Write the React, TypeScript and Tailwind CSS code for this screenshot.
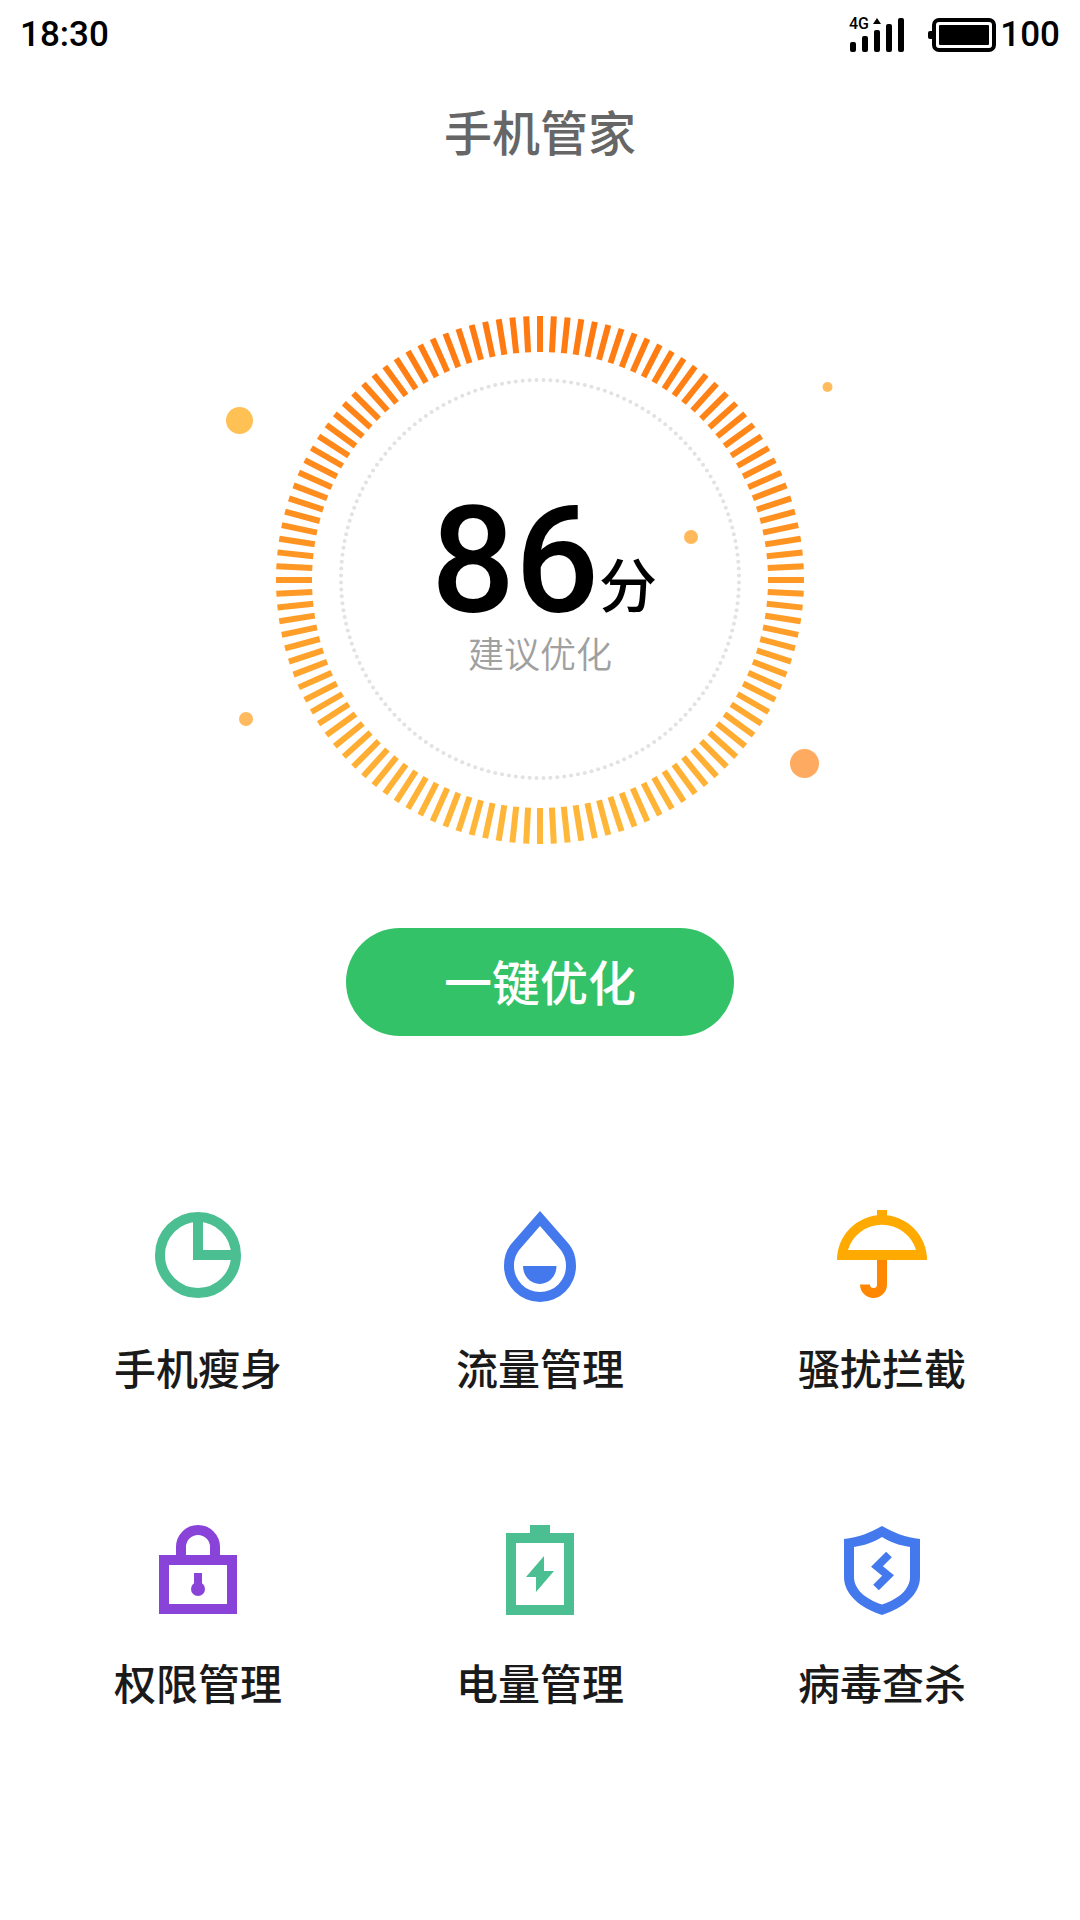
import React from 'react'

interface Orb {
  cx: number
  cy: number
  r: number
  color: string
}

interface ToolItem {
  name: string
  icon: React.ComponentType
}

const SignalIcon: React.FC = () => (
  <svg className="w-[56px] h-[36px] overflow-visible" viewBox="0 0 56 36" aria-hidden="true">
    <text x="1" y="12" fontSize="16" fontWeight="500" fontFamily="Roboto, sans-serif">4G</text>
    <path d="M29 1l4 6h-8z" />
    <rect x="2" y="25" width="6" height="10" rx="2" />
    <rect x="14" y="19" width="6" height="16" rx="2" />
    <rect x="26" y="13" width="6" height="22" rx="2" />
    <rect x="38" y="7" width="6" height="28" rx="2" />
    <rect x="50" y="1" width="6" height="34" rx="2" />
  </svg>
)

const BatteryIcon: React.FC = () => (
  <svg className="w-[68px] h-[36px]" viewBox="0 0 68 36" aria-hidden="true">
    <rect x="0" y="14" width="6" height="8" rx="2" />
    <rect x="6" y="3" width="60" height="30" rx="5" fill="none" stroke="black" strokeWidth="4" />
    <rect x="11" y="8" width="50" height="20" rx="1" />
  </svg>
)

const StatusBar: React.FC = () => (
  <header className="flex h-[70px] items-center justify-between px-5 font-[Roboto,sans-serif] text-[35px] font-medium text-black">
    <span>18:30</span>
    <div className="flex items-center">
      <SignalIcon />
      <span className="ml-6">
        <BatteryIcon />
      </span>
      <span className="ml-1">100</span>
    </div>
  </header>
)

const orbs: Orb[] = [
  { cx: 19.5, cy: 110.5, r: 13.5, color: '#ffc054' },
  { cx: 607.5, cy: 77, r: 5, color: '#ffbb5c' },
  { cx: 471, cy: 227, r: 7, color: '#ffb95a' },
  { cx: 26, cy: 409, r: 7, color: '#ffb95e' },
  { cx: 584.5, cy: 453.5, r: 14.5, color: '#ffaa61' },
]

const TICKS = 120
const DOTS = 180

// point on a circle around (320, cy)
const polar = (cy: number, radius: number, index: number, count: number) => {
  const a = (index / count) * Math.PI * 2
  return [320 + radius * Math.sin(a), cy - radius * Math.cos(a)]
}

const Dial: React.FC = () => (
  <svg className="col-start-1 row-start-1 w-[640px] h-[540px]" viewBox="0 0 640 540" aria-hidden="true">
    <defs>
      <linearGradient id="tick" gradientUnits="userSpaceOnUse" x1="0" y1="6" x2="0" y2="534">
        <stop offset="0" stopColor="#ff7810" />
        <stop offset="1" stopColor="#ffb93a" />
      </linearGradient>
    </defs>
    <g stroke="url(#tick)" strokeWidth="6">
      {Array.from({ length: TICKS }, (_, i) => {
        const [x1, y1] = polar(270, 228, i + 0.001, TICKS)
        const [x2, y2] = polar(270, 264, i + 0.001, TICKS)
        return <line key={i} x1={x1} y1={y1} x2={x2} y2={y2} />
      })}
    </g>
    <g fill="#e2e2e2">
      {Array.from({ length: DOTS }, (_, i) => {
        const [cx, cy] = polar(269, 199, i + 0.5, DOTS)
        return <circle key={i} cx={cx} cy={cy} r="2" />
      })}
    </g>
    {orbs.map(orb => (
      <circle key={`${orb.cx}-${orb.cy}`} cx={orb.cx} cy={orb.cy} r={orb.r} fill={orb.color} />
    ))}
  </svg>
)

const PieIcon: React.FC = () => (
  <svg className="size-24" viewBox="0 0 96 96" fill="none" stroke="#4bbf92" strokeWidth="10">
    <circle cx="48" cy="48" r="38" />
    <path d="M48 10v38h38" />
  </svg>
)

const DropIcon: React.FC = () => (
  <svg className="size-24" viewBox="0 0 96 96" fill="#4479ee">
    <path
      fillRule="evenodd"
      d="M48 4L20 36C14.500 42.500 12 50 12 59A36 36 0 0 0 84 59C84 50 81.500 42.500 76 36ZM48 19L68 42C72.500 47.500 74 53 74 59A26 26 0 0 1 22 59C22 53 23.500 47.500 28 42Z"
    />
    <path d="M31 59h33.500a16.750 18 0 0 1-33.500 0z" />
  </svg>
)

const UmbrellaIcon: React.FC = () => (
  <svg className="size-24" viewBox="0 0 96 96" fill="#ffaa00">
    <path d="M48 53V77.500A8.500 8.500 0 0 1 31 77.500" fill="none" stroke="#ff8800" strokeWidth="10" />
    <path d="M43 3h10v8H43z" />
    <path fillRule="evenodd" d="M3 53A45 45 0 0 1 93 53ZM14 43H82A35.500 35.500 0 0 0 14 43Z" />
  </svg>
)

const LockIcon: React.FC = () => (
  <svg className="size-24" viewBox="0 0 96 96" fill="none" stroke="#8943d8" strokeWidth="10">
    <path d="M31 36V25a17 17 0 0 1 34 0V36" />
    <path d="M14 38h68v49H14z" />
    <path d="M44 51h8v12h-8z" fill="#8943d8" stroke="none" />
    <circle cx="48" cy="67" r="7" fill="#8943d8" stroke="none" />
  </svg>
)

const PowerIcon: React.FC = () => (
  <svg className="size-24" viewBox="0 0 96 96" fill="#4bbf92">
    <path d="M38 3h20v9H38z" />
    <path d="M19 16h58v72H19z" fill="none" stroke="#4bbf92" strokeWidth="10" />
    <path d="M52 34v15h10L44 70V55H34z" />
  </svg>
)

const ShieldIcon: React.FC = () => (
  <svg className="size-24" viewBox="0 0 96 96" fill="#4479ee">
    <path
      fillRule="evenodd"
      d="M48 4C59 10.500 72 15.500 86 17V55C86 72 70 86 48 93C26 86 10 72 10 55V17C24 15.500 37 10.500 48 4ZM48 15C39 20.500 30 23.500 20 25V55C20 67 31 77 48 82.500C65 77 76 67 76 55V25C66 23.500 57 20.500 48 15Z"
    />
    <path d="M55 32.500L43 44.500L54 53.500L42 65.500" fill="none" stroke="#4479ee" strokeWidth="8" />
  </svg>
)

const tools: ToolItem[] = [
  { name: '手机瘦身', icon: PieIcon },
  { name: '流量管理', icon: DropIcon },
  { name: '骚扰拦截', icon: UmbrellaIcon },
  { name: '权限管理', icon: LockIcon },
  { name: '电量管理', icon: PowerIcon },
  { name: '病毒查杀', icon: ShieldIcon },
]

const ToolButton: React.FC<{ tool: ToolItem }> = ({ tool }) => {
  const Icon = tool.icon

  return (
    <button type="button" className="flex flex-col items-center gap-[34px] text-[42px] leading-[60px] font-medium text-[#1a1a1a]">
      <Icon />
      {tool.name}
    </button>
  )
}

export default function App() {
  return (
    <div className="min-h-screen bg-white font-['Noto_Sans_CJK_SC',sans-serif]">
      <StatusBar />
      <main className="flex flex-col items-center">
        <h1 className="mt-6 text-[48px] leading-[72px] font-medium text-[#666666]">手机管家</h1>

        <section className="mt-36 grid place-items-center">
          <Dial />
          <div className="col-start-1 row-start-1 flex flex-col items-center pt-1">
            <p className="flex items-end pl-2 text-black">
              <span className="font-[Roboto,sans-serif] text-[148px] leading-[140px] font-medium">86</span>
              <span className="pb-5 text-[58px] leading-[60px] font-medium">分</span>
            </p>
            <p className="text-[36px] leading-[40px] font-[350] text-[#a0a0a0]">建议优化</p>
          </div>
        </section>

        <button
          type="button"
          className="mt-[78px] h-[108px] w-[388px] rounded-full bg-[#33c268] pb-1 text-[48px] font-medium text-white"
        >
          一键优化
        </button>

        <nav className="mt-[171px] grid w-full grid-cols-3 gap-y-[125px] px-[27px] pb-16">
          {tools.map(tool => (
            <ToolButton key={tool.name} tool={tool} />
          ))}
        </nav>
      </main>
    </div>
  )
}
